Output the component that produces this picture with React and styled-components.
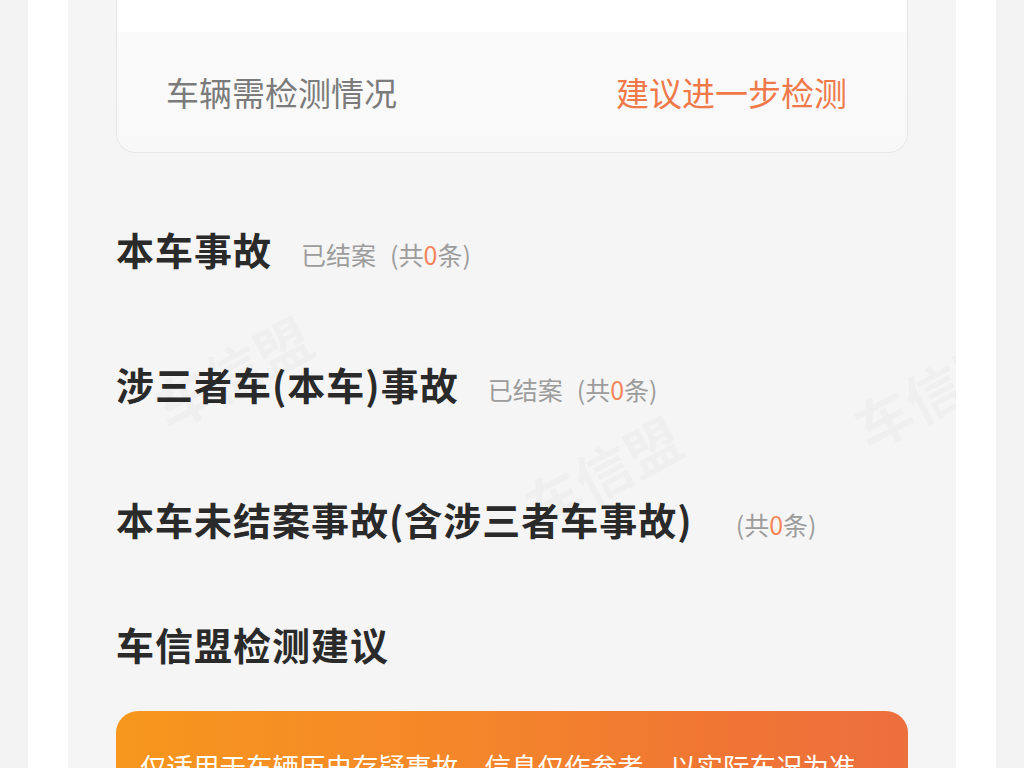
import styled, { createGlobalStyle } from "styled-components";

const GlobalStyle = createGlobalStyle`
  html, body {
    margin: 0;
    padding: 0;
    background: #f3f3f3;
  }
  body {
    font-family: "Noto Sans CJK SC", "Noto Sans", sans-serif;
    overflow: hidden;
  }
`;

const Frame = styled.div`
  height: 768px;
  padding: 0 28px;
  background: #f3f3f3;
`;

const Screen = styled.div`
  height: 100%;
  padding: 0 40px;
  background: #fff;
`;

const Content = styled.main`
  position: relative;
  height: 100%;
  padding: 0 48px;
  background: #f5f5f5;
  overflow: hidden;
`;

const CheckCard = styled.section`
  background: #fff;
  border: 1px solid #e6e6e6;
  border-top: none;
  border-radius: 0 0 20px 20px;
  overflow: hidden;
`;

const CardTop = styled.div`
  height: 32px;
  background: #fff;
`;

const CheckRow = styled.div`
  display: flex;
  align-items: center;
  justify-content: space-between;
  height: 120px;
  padding: 0 60px 0 49px;
  background: linear-gradient(180deg, #fafafa, #f8f8f8);
  font-size: 33px;
`;

const CheckLabel = styled.span`
  color: #7b7b7b;
`;

const CheckValue = styled.span`
  color: #f0794a;
`;

const AccidentList = styled.div`
  padding-top: 30px;
`;

const AccidentRow = styled.div`
  display: flex;
  align-items: baseline;
  height: 135px;
  padding-top: 43px;
  box-sizing: border-box;
`;

const Title = styled.h2`
  margin: 0;
  font-size: 38px;
  letter-spacing: 1px;
  font-weight: 700;
  color: #2a2a2a;
  line-height: 1.2;
`;

const Summary = styled.span`
  margin-left: 29px;
  font-size: 25px;
  color: #9c9c9c;
`;

const Count = styled.span`
  margin-left: 14px;
`;

const Num = styled.span`
  color: #f5855a;
`;

const AdviceHead = styled.div`
  height: 118px;
  padding-top: 33px;
  box-sizing: border-box;
`;

const AdviceBox = styled.div`
  margin-top: 5px;
  padding: 34px 24px 30px;
  border-radius: 22px;
  background: linear-gradient(90deg, #f7971d 0%, #f4862a 45%, #f07633 75%, #ec6f3e 100%);
  color: #fff;
  font-size: 26.5px;
  line-height: 1.6;
`;

const Watermark = styled.span`
  position: absolute;
  left: ${(p) => p.x}px;
  top: ${(p) => p.y}px;
  font-size: ${(p) => p.size || 56}px;
  font-weight: 700;
  color: rgba(0, 0, 0, 0.025);
  transform: rotate(-28deg);
  white-space: nowrap;
  pointer-events: none;
`;

const accidents = [
  { title: "本车事故", status: "已结案", count: 0 },
  { title: "涉三者车(本车)事故", status: "已结案", count: 0 },
  { title: "本车未结案事故(含涉三者车事故)", status: "", count: 0 },
];

export default function App() {
  return (
    <Frame>
      <GlobalStyle />
      <Screen>
        <Content>
          <CheckCard>
            <CardTop />
            <CheckRow>
              <CheckLabel>车辆需检测情况</CheckLabel>
              <CheckValue>建议进一步检测</CheckValue>
            </CheckRow>
          </CheckCard>

          <AccidentList>
            {accidents.map((a) => (
              <AccidentRow key={a.title}>
                <Title>{a.title}</Title>
                <Summary>
                  {a.status}
                  <Count>
                    (共<Num>{a.count}</Num>条)
                  </Count>
                </Summary>
              </AccidentRow>
            ))}
          </AccidentList>

          <AdviceHead>
            <Title>车信盟检测建议</Title>
          </AdviceHead>
          <AdviceBox>
            仅适用于车辆历史存疑事故，信息仅作参考，以实际车况为准。
          </AdviceBox>

          <Watermark x={80} y={330}>车信盟</Watermark>
          <Watermark x={450} y={430}>车信盟</Watermark>
          <Watermark x={780} y={350}>车信盟</Watermark>
          <Watermark x={390} y={675} size={30}>车信盟</Watermark>
        </Content>
      </Screen>
    </Frame>
  );
}
